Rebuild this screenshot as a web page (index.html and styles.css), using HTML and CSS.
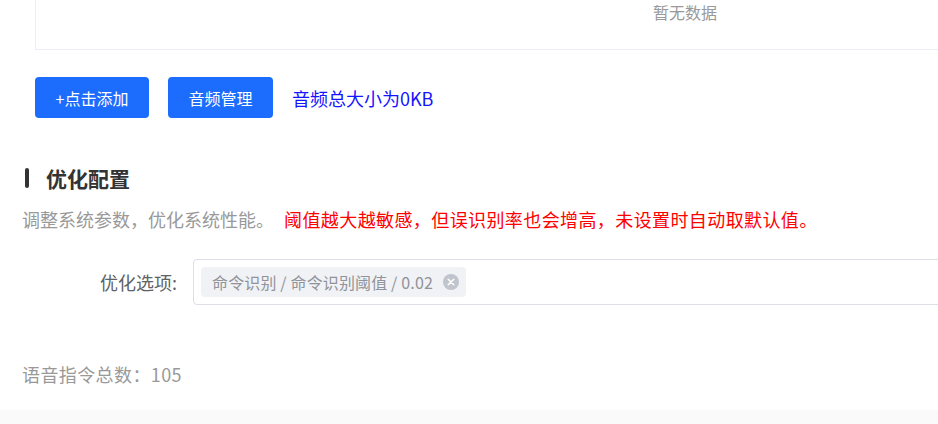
FILE: index.html
```html
<!DOCTYPE html>
<html lang="zh">
<head>
<meta charset="utf-8">
<title>优化配置</title>
<link rel="stylesheet" href="styles.css">
</head>
<body>
<div class="page">
  <div class="content">
    <div class="table-wrap">
      <div class="table-empty">暂无数据</div>
    </div>
    <div class="actions">
      <button class="btn">+点击添加</button>
      <button class="btn">音频管理</button>
      <span class="size-info">音频总大小为0KB</span>
    </div>
    <div class="section-title">
      <span class="bar"></span>
      <span class="title-text">优化配置</span>
    </div>
    <div class="desc">
      <span class="desc-gray">调整系统参数，优化系统性能。</span>
      <span class="desc-red">阈值越大越敏感，但误识别率也会增高，未设置时自动取默认值。</span>
    </div>
    <div class="form-row">
      <label class="form-label">优化选项:</label>
      <div class="select-box">
        <span class="tag">
          <span class="tag-text">命令识别 / 命令识别阈值 / 0.02</span>
          <span class="tag-close">
            <svg width="16" height="16" viewBox="0 0 16 16"><circle cx="8" cy="8" r="8" fill="#c0c4cc"/><path d="M5.2 5.2 L10.8 10.8 M10.8 5.2 L5.2 10.8" stroke="#fff" stroke-width="1.5" stroke-linecap="round"/></svg>
          </span>
        </span>
      </div>
    </div>
    <div class="total">语音指令总数：105</div>
  </div>
  <div class="footer-band"></div>
</div>
</body>
</html>
```
FILE: styles.css
```css
html, body {
  margin: 0;
  padding: 0;
  background: #fff;
  overflow: hidden;
}
body {
  font-family: "Noto Sans CJK SC", "Noto Sans", sans-serif;
  width: 938px;
  height: 424px;
}
.page {
  display: flex;
  flex-direction: column;
  height: 424px;
  width: 938px;
  overflow: hidden;
}
.content {
  padding-left: 22px;
  flex: none;
  height: 410px;
  overflow: hidden;
}
.table-wrap {
  margin-left: 13px;
  width: 1298px;
  height: 49px;
  border-left: 1px solid #ebeef5;
  border-bottom: 1px solid #ebeef5;
}
.table-empty {
  text-align: center;
  font-size: 16px;
  line-height: 24px;
  color: #999;
}
.actions {
  margin-left: 13px;
  margin-top: 27px;
  display: flex;
  align-items: center;
  gap: 19px;
}
.btn {
  height: 41px;
  padding: 0 20.5px;
  border: none;
  border-radius: 4px;
  background: #1c6cfe;
  color: #fff;
  font-family: inherit;
  font-size: 16px;
}
.size-info {
  color: #1414ff;
  font-size: 18px;
}
.section-title {
  margin-top: 46px;
  display: flex;
  align-items: center;
  height: 28px;
  margin-left: 3px;
}
.bar {
  width: 4px;
  height: 20px;
  border-radius: 2px;
  background: #333;
  margin-right: 17px;
}
.title-text {
  font-size: 21px;
  font-weight: bold;
  color: #333;
}
.desc {
  margin-top: 15px;
  font-size: 18px;
  line-height: 24px;
  white-space: nowrap;
}
.desc-gray {
  color: #999;
}
.desc-red {
  color: #ff0000;
  margin-left: 6px;
  letter-spacing: 0.4px;
}
.form-row {
  margin-top: 28px;
  display: flex;
  align-items: center;
}
.form-label {
  flex: none;
  width: 171px;
  padding-right: 16px;
  box-sizing: border-box;
  text-align: right;
  font-size: 18px;
  color: #606266;
}
.select-box {
  flex: none;
  width: 760px;
  height: 46px;
  box-sizing: border-box;
  border: 1px solid #dcdfe6;
  border-radius: 4px;
  padding: 7px;
  display: flex;
  align-items: center;
}
.tag {
  height: 30px;
  display: inline-flex;
  align-items: center;
  padding: 0 7px 0 11px;
  background: #f0f2f5;
  border-radius: 4px;
  gap: 10px;
}
.tag-text {
  font-size: 16px;
  color: #909399;
  letter-spacing: 0.15px;
}
.tag-close {
  display: flex;
}
.total {
  margin-top: 57px;
  font-size: 18px;
  line-height: 24px;
  color: #999;
  letter-spacing: 0.4px;
}
.footer-band {
  flex: 1;
  background: #fafafa;
}
```
